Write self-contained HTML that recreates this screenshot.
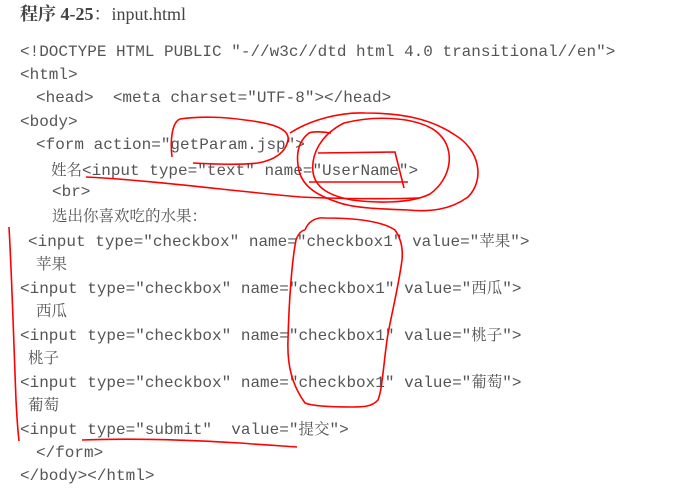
<!DOCTYPE html>
<html><head><meta charset="UTF-8"><style>
body{margin:0;width:673px;height:491px;background:#fff;overflow:hidden;position:relative}
.t{position:absolute;left:20px;top:0px;font:18px "Liberation Serif","Noto Serif CJK SC",serif;color:#444}
.t b{font-weight:bold}
.l{position:absolute;font:16px "Liberation Mono","Noto Sans CJK SC",monospace;color:#555;white-space:pre;line-height:20px}
.c{font-family:"Noto Serif CJK SC","Liberation Serif",serif;font-size:15.5px}
svg{position:absolute;left:0;top:0}
</style></head><body>
<div class="t"><b>程序 4-25</b>：input.html</div>
<div class="l" style="left:20px;top:42px">&lt;!DOCTYPE HTML PUBLIC "-//w3c//dtd html 4.0 transitional//en"&gt;</div>
<div class="l" style="left:20px;top:65px">&lt;html&gt;</div>
<div class="l" style="left:36px;top:88px">&lt;head&gt;  &lt;meta charset="UTF-8"&gt;&lt;/head&gt;</div>
<div class="l" style="left:20px;top:112px">&lt;body&gt;</div>
<div class="l" style="left:36px;top:135px">&lt;form action="getParam.jsp"&gt;</div>
<div class="l" style="left:51px;top:159px"><span class="c">姓名</span>&lt;input type="text" name="UserName"&gt;</div>
<div class="l" style="left:52px;top:182px">&lt;br&gt;</div>
<div class="l" style="left:52px;top:205px"><span class="c">选出你喜欢吃的水果：</span></div>
<div class="l" style="left:28px;top:230px">&lt;input type="checkbox" name="checkbox1" value="<span class="c">苹果</span>"&gt;</div>
<div class="l" style="left:36px;top:253px"><span class="c">苹果</span></div>
<div class="l" style="left:20px;top:277px">&lt;input type="checkbox" name="checkbox1" value="<span class="c">西瓜</span>"&gt;</div>
<div class="l" style="left:36px;top:300px"><span class="c">西瓜</span></div>
<div class="l" style="left:20px;top:324px">&lt;input type="checkbox" name="checkbox1" value="<span class="c">桃子</span>"&gt;</div>
<div class="l" style="left:28px;top:347px"><span class="c">桃子</span></div>
<div class="l" style="left:20px;top:371px">&lt;input type="checkbox" name="checkbox1" value="<span class="c">葡萄</span>"&gt;</div>
<div class="l" style="left:28px;top:394px"><span class="c">葡萄</span></div>
<div class="l" style="left:20px;top:418px">&lt;input type="submit"  value="<span class="c">提交</span>"&gt;</div>
<div class="l" style="left:36px;top:443px">&lt;/form&gt;</div>
<div class="l" style="left:20px;top:466px">&lt;/body&gt;&lt;/html&gt;</div>
<svg width="673" height="491" fill="none" stroke="#f00" stroke-width="1.6">
<path d="M172 157 C170 140 172 122 180 119 C200 116 225 117 245 120 C270 123 290 128 288 140 C286 152 275 160 258 163 C240 165 210 164 193 163"/>
<path d="M290 133 C310 120 340 112 365 113 C400 113 430 118 455 135 C480 150 485 180 468 197 C450 210 430 212 408 210 C380 209 355 208 340 203 C315 195 300 185 298 165 C296 150 300 140 309 133 C315 131 322 132 331 133"/>
<path d="M344 123 C380 114 425 118 440 135 C455 150 452 178 430 194 C410 204 375 203 352 200 C330 196 315 188 313 172 C311 155 320 135 344 123"/>
<path d="M86 177 C150 180 240 192 301 197 C340 199 390 199 419 198"/>
<path d="M309 182 L408 182"/>
<path d="M318 153 L395 152 L404 188"/>
<path d="M305 230 C308 222 315 217 325 218 C350 218 380 220 395 230 C402 240 403 250 402 260 C398 290 390 320 387 340 C383 370 382 390 378 400 C372 407 362 407 352 407 C330 407 312 406 305 403 C292 385 287 365 288 340 C289 300 292 260 296 240 C298 234 302 230 305 230"/>
<path d="M9 227 C12 280 14 350 16 400 C17 420 18 432 19 441"/>
<path d="M82 440 C130 438 190 440 240 443 C265 445 285 446 297 447"/>
</svg>
</body></html>
